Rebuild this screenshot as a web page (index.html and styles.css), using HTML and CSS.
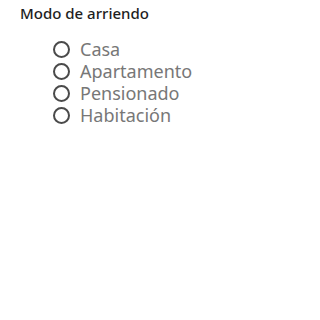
FILE: index.html
```html
<!DOCTYPE html>
<html lang="es">
<head>
  <meta charset="UTF-8">
  <title>Modo de arriendo</title>
  <link rel="stylesheet" href="styles.css">
</head>
<body>

  <!-- Rental mode -->
  <div class="field">
    <div class="field-label">Modo de arriendo</div>
    <div class="options">
      <label class="option"><input type="radio" name="modo"><span class="radio"></span>Casa</label>
      <label class="option"><input type="radio" name="modo"><span class="radio"></span>Apartamento</label>
      <label class="option"><input type="radio" name="modo"><span class="radio"></span>Pensionado</label>
      <label class="option"><input type="radio" name="modo"><span class="radio"></span>Habitación</label>
    </div>
  </div>

</body>
</html>
```

FILE: styles.css
```css
body {
  margin: 0;
  background: #fff;
  font-family: 'Noto Sans', sans-serif;
}

.field {
  padding: 2px 0 0 20px;
}

.field-label {
  font-size: 15px;
  font-weight: 500;
  color: #1e1e1e;
  line-height: 22px;
}

.options {
  display: flex;
  flex-direction: column;
  padding: 14px 0 0 33px;
}

.option {
  display: flex;
  align-items: center;
  gap: 10px;
  font-size: 18px;
  line-height: 22px;
  color: #777;
  cursor: pointer;
}

.option input {
  display: none;
}

.radio {
  flex-shrink: 0;
  box-sizing: border-box;
  width: 17px;
  height: 17px;
  border: 2.5px solid #4a4a4a;
  border-radius: 50%;
}

.option input:checked + .radio {
  background: radial-gradient(#4a4a4a 40%, transparent 45%);
}
```
